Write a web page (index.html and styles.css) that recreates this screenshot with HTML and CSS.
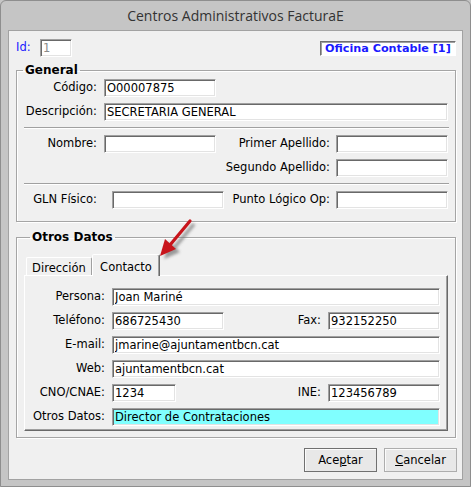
FILE: index.html
```html
<!DOCTYPE html>
<html>
<head>
    <meta charset="utf-8">
    <title>Centros Administrativos FacturaE</title>
    <link rel="stylesheet" href="styles.css">
</head>
<body>
    <div class="window">
        <div class="titlebar">Centros Administrativos FacturaE</div>

        <div class="client">
            <div class="top-row">
                <div class="id-field">
                    <label for="centroId">Id:</label>
                    <input type="text" id="centroId" class="readonly" value="1" readonly>
                </div>
                <div class="office">Oficina Contable [1]</div>
            </div>

            <!-- Datos generales del centro -->
            <fieldset class="group general">
                <legend>General</legend>
                <div class="row">
                    <label class="lbl" for="codigo">Código:</label>
                    <input type="text" id="codigo" class="w112" value="O00007875">
                </div>
                <div class="row">
                    <label class="lbl" for="descripcion">Descripción:</label>
                    <input type="text" id="descripcion" class="w344" value="SECRETARIA GENERAL">
                </div>
                <div class="separator"></div>
                <div class="row">
                    <label class="lbl" for="nombre">Nombre:</label>
                    <input type="text" id="nombre" class="w112">
                    <label class="lbl-mid" for="apellido1">Primer Apellido:</label>
                    <input type="text" id="apellido1" class="w112">
                </div>
                <div class="row">
                    <label class="lbl-long" for="apellido2">Segundo Apellido:</label>
                    <input type="text" id="apellido2" class="w112">
                </div>
                <div class="separator"></div>
                <div class="row">
                    <label class="lbl lbl-gln" for="gln">GLN Físico:</label>
                    <input type="text" id="gln" class="w112">
                    <label class="lbl-punto" for="puntoLogico">Punto Lógico Op:</label>
                    <input type="text" id="puntoLogico" class="w112">
                </div>
            </fieldset>

            <!-- Otros datos: pestañas de dirección y contacto -->
            <fieldset class="group other">
                <legend>Otros Datos</legend>
                <div class="tabs">
                    <div class="tab">Dirección</div>
                    <div class="tab active">Contacto</div>
                </div>
                <div class="tab-panel">
                    <div class="row">
                        <label class="lbl" for="persona">Persona:</label>
                        <input type="text" id="persona" class="w328" value="Joan Mariné">
                    </div>
                    <div class="row">
                        <label class="lbl" for="telefono">Teléfono:</label>
                        <input type="text" id="telefono" class="w112" value="686725430">
                        <label class="lbl-right" for="fax">Fax:</label>
                        <input type="text" id="fax" class="w112" value="932152250">
                    </div>
                    <div class="row">
                        <label class="lbl" for="email">E-mail:</label>
                        <input type="text" id="email" class="w328" value="jmarine@ajuntamentbcn.cat">
                    </div>
                    <div class="row">
                        <label class="lbl" for="web">Web:</label>
                        <input type="text" id="web" class="w328" value="ajuntamentbcn.cat">
                    </div>
                    <div class="row">
                        <label class="lbl" for="cnae">CNO/CNAE:</label>
                        <input type="text" id="cnae" class="w64" value="1234">
                        <label class="lbl-right lbl-ine" for="ine">INE:</label>
                        <input type="text" id="ine" class="w112" value="123456789">
                    </div>
                    <div class="row">
                        <label class="lbl" for="otros">Otros Datos:</label>
                        <input type="text" id="otros" class="w328 highlight" value="Director de Contrataciones">
                    </div>
                </div>
            </fieldset>

            <div class="buttons">
                <button type="button" class="btn default">Ace<u>p</u>tar</button>
                <button type="button" class="btn"><u>C</u>ancelar</button>
            </div>

            <!-- flecha que señala la pestaña Contacto -->
            <svg class="arrow" width="80" height="60" viewBox="0 0 80 60">
                <defs>
                    <filter id="arrowShadow" x="-20%" y="-20%" width="140%" height="140%">
                        <feGaussianBlur stdDeviation="1.6"/>
                    </filter>
                </defs>
                <g transform="translate(4 3)" fill="#7a7a7a" stroke="#7a7a7a" filter="url(#arrowShadow)" opacity="0.75">
                    <line x1="50" y1="11" x2="30" y2="35" stroke-width="3.5"/>
                    <polygon points="20,46 36,39 25,29" stroke="none"/>
                </g>
                <g fill="#c8141b" stroke="#c8141b">
                    <line x1="50" y1="11" x2="30" y2="35" stroke-width="3.2" stroke-linecap="round"/>
                    <polygon points="20,46 36,39 25,29" stroke="none"/>
                </g>
            </svg>
        </div>
    </div>
</body>
</html>
```

FILE: styles.css
```css
body {
    margin: 0;
    background: #c6c6c6;
    font-family: "DejaVu Sans", Verdana, sans-serif;
    font-size: 11.5px;
    color: #000;
}
.window {
    width: 471px;
    height: 487px;
    box-sizing: border-box;
    display: flex;
    flex-direction: column;
    background: #c5c5c5;
    border: 1px solid #8e8e8e;
    border-radius: 6px 6px 0 0;
}
.titlebar {
    height: 29px;
    line-height: 29px;
    text-align: center;
    font-family: "Open Sans", "Noto Sans", sans-serif;
    font-size: 14px;
    color: #333;
}
.client {
    position: relative;
    flex: 1;
    margin: 0 7px 6px 7px;
    padding: 8px 6px 0 7px;
    background: #f0f0f0;
    border: 1px solid #a2a2a2;
}

/* cabecera: id + oficina contable */
.top-row {
    display: flex;
    justify-content: space-between;
    align-items: center;
    height: 18px;
}
.id-field {
    display: flex;
    align-items: center;
}
.id-field label {
    color: #1a1aff;
    width: 24px;
    margin-top: -3px;
}
.office {
    width: 136px;
    height: 15px;
    box-sizing: border-box;
    padding-left: 4px;
    line-height: 13px;
    background: #fff;
    border: 1px solid;
    border-color: #707070 #fff #fff #707070;
    box-shadow: inset 1px 1px 0 #a0a0a0;
    color: #1a1aff;
    font-weight: bold;
    font-size: 11.2px;
    white-space: nowrap;
    overflow: hidden;
}

/* inputs estilo edit clásico */
input[type="text"] {
    height: 18px;
    box-sizing: border-box;
    margin: 0;
    padding: 0 2px;
    border: 1px solid;
    border-color: #a0a0a0 #fff #fff #a0a0a0;
    box-shadow: inset 1px 1px 0 #696969, inset -1px -1px 0 #e3e3e3;
    background: #fff;
    font-family: "DejaVu Sans", Verdana, sans-serif;
    font-size: 11.5px;
    color: #000;
    outline: none;
}
input.readonly {
    width: 32px;
    color: #8a8a8a;
}
input.w64 { width: 64px; }
input.w112 { width: 112px; }
input.w328 { width: 328px; }
input.w344 { width: 344px; }
input.highlight {
    background: #80ffff;
}

/* group boxes */
.group {
    margin: 0;
    padding: 0;
    border: 1px solid #a5a5a5;
    box-shadow: inset 1px 1px 0 #fff, 1px 1px 0 #fff;
}
.group legend {
    margin-left: 6px;
    padding: 0 2px;
    font-weight: bold;
    font-size: 12px;
    line-height: 14px;
}
.general {
    margin-top: 6px;
    padding: 2px 0 12px 0;
}
.other {
    margin-top: 8px;
    padding: 10px 7px 6px 7px;
}

.row {
    display: flex;
    align-items: center;
    height: 18px;
    margin-bottom: 6px;
}
.row:last-child {
    margin-bottom: 0;
}
.lbl, .lbl-mid, .lbl-long, .lbl-punto, .lbl-right {
    text-align: right;
    white-space: nowrap;
    margin-top: -2px;
}
.lbl {
    width: 80px;
    margin-right: 7px;
}
.lbl-gln {
    margin-right: 15px;
}
.lbl-mid {
    width: 114px;
    margin-right: 6px;
}
.lbl-long {
    width: 313px;
    margin-right: 6px;
}
.lbl-punto {
    width: 106px;
    margin-right: 6px;
}
.lbl-right {
    width: 97px;
    margin-right: 7px;
}
.lbl-ine {
    width: 145px;
}
.separator {
    height: 0;
    margin: 6px 6px 6px 7px;
    border-top: 1px solid #a0a0a0;
    border-bottom: 1px solid #fff;
}

/* pestañas */
.tabs {
    display: flex;
    align-items: flex-end;
    padding-left: 2px;
    height: 21px;
}
.tab {
    width: 66px;
    height: 18px;
    box-sizing: border-box;
    padding-top: 2px;
    text-align: center;
    line-height: 17px;
    border: 1px solid;
    border-color: #fff #a0a0a0 transparent #fff;
    border-bottom: none;
    border-radius: 2px 2px 0 0;
}
.tab.active {
    position: relative;
    width: 68px;
    height: 22px;
    margin-bottom: -1px;
    line-height: 20px;
    background: #f0f0f0;
    border-color: #fff #696969 transparent #fff;
    box-shadow: inset -1px 0 0 #a0a0a0;
}
.tab-panel {
    padding: 12px 0 4px 0;
    border: 1px solid;
    border-color: #fff #696969 #696969 #fff;
    box-shadow: inset -1px -1px 0 #a0a0a0;
}

/* botones */
.buttons {
    display: flex;
    justify-content: flex-end;
    gap: 7px;
    margin-top: 10px;
    margin-right: -1px;
}
.btn {
    width: 73px;
    height: 24px;
    padding: 0;
    background: #e8e8e8;
    border: 1px solid #adadad;
    box-shadow: inset 1px 1px 0 #fbfbfb;
    font-family: "DejaVu Sans", Verdana, sans-serif;
    font-size: 11.5px;
    color: #000;
}
.btn.default {
    border-color: #707070;
}

.arrow {
    position: absolute;
    left: 131px;
    top: 179px;
}
```
